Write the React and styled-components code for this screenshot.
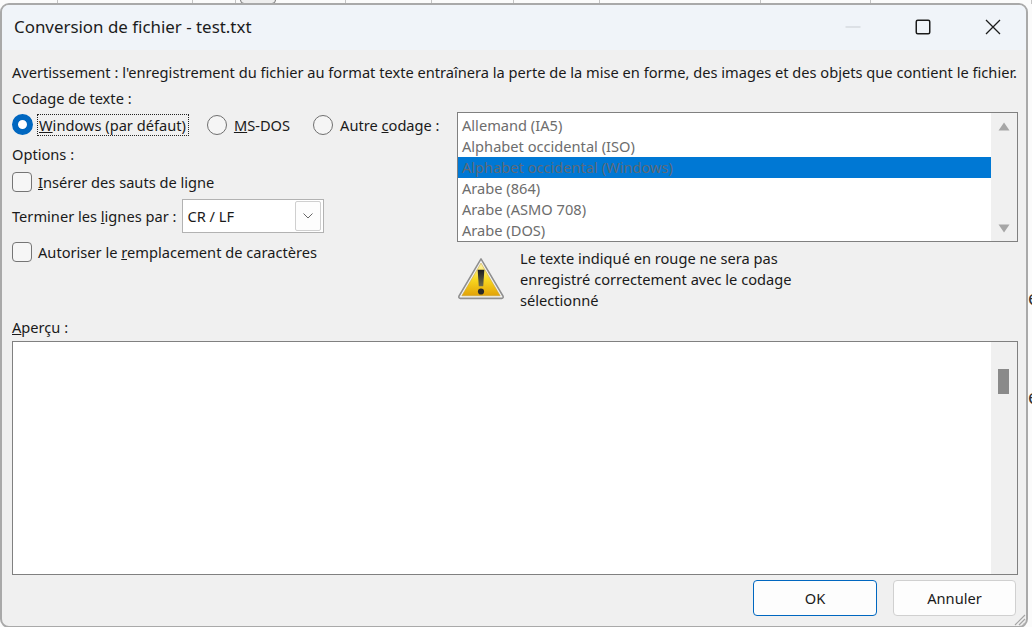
import React from 'react'
import styled, { createGlobalStyle } from 'styled-components'

const GlobalStyle = createGlobalStyle`
  html, body { margin: 0; padding: 0; background: #fff; }
  * { box-sizing: border-box; }
`

const Page = styled.div`
  position: relative;
  width: 1032px;
  height: 627px;
  overflow: hidden;
  background: #fbfbfb;
  font-family: "Noto Sans", "Open Sans", sans-serif;
  font-size: 14.64px;
  color: #1a1a1a;
`

// bits of the spreadsheet that show behind the dialog
const SheetTop = styled.div`
  position: absolute;
  top: 0;
  left: 0;
  display: flex;
  height: 4px;
`
const SheetCell = styled.div`
  width: ${p => p.$w}px;
  border-right: 1px solid #c4c4c4;
`
const SheetTab = styled.div`
  position: absolute;
  top: -6px;
  left: 240px;
  width: 36px;
  height: 10px;
  border: 1px solid #777;
  border-radius: 4px;
  background: #eee;
`
const SheetGlyph = styled.span`
  position: absolute;
  top: ${p => p.$y}px;
  left: 1028px;
  font-size: 19px;
  line-height: 20px;
  color: #333;
`

const Dialog = styled.div`
  position: relative;
  width: 1028px;
  height: 625px;
  margin-top: 3px;
  border: 2px solid #a9a9a9;
  border-radius: 9px;
  background: #f0f0f0;
  overflow: hidden;
`

const TitleBar = styled.div`
  display: flex;
  align-items: center;
  height: 45px;
  background: #f0f4f9;
  padding-left: 12px;
`
const Title = styled.div`
  flex: 1;
  font-size: 16.9px;
  color: #1c1c1c;
  margin-top: -2px;
`
const WinControls = styled.div`
  display: flex;
  align-items: center;
  margin-right: -2px;
`
const WinButton = styled.div`
  display: flex;
  align-items: center;
  justify-content: center;
  width: 70px;
  height: 45px;
  margin-top: -1px;
`

const Body = styled.div`
  padding: 12px 8px 0 10px;
`
const TextLine = styled.div`
  height: 21px;
  line-height: 21px;
  white-space: nowrap;
  margin-top: ${p => p.$top || 0}px;
`

const Main = styled.div`
  display: grid;
  grid-template-columns: 445px 561px;
  height: 205px;
  margin-top: 3px;
`
const LeftCol = styled.div`
  display: flex;
  flex-direction: column;
`
const RightCol = styled.div`
  display: flex;
  flex-direction: column;
`

const RadioRow = styled.div`
  display: flex;
  align-items: center;
  height: 22px;
  margin-top: 2px;
`
const RadioDot = styled.span`
  flex: none;
  width: ${p => (p.$on ? 21 : 20)}px;
  height: ${p => (p.$on ? 21 : 20)}px;
  border-radius: 50%;
  margin-top: -1px;
  background: ${p => (p.$on ? '#fff' : '#f5f5f5')};
  border: ${p => (p.$on ? '6.5px solid #0067c0' : '1.4px solid #6f6f6f')};
`
const RadioLabel = styled.span`
  white-space: nowrap;
  margin-left: ${p => p.$gap}px;
  margin-right: ${p => p.$after}px;
  padding: 0 ${p => (p.$focus ? 2 : 0)}px 0 1px;
  height: 22px;
  line-height: 20px;
  border: ${p => (p.$focus ? '1px dotted #222' : '1px solid transparent')};
`

const CheckRow = styled.div`
  display: flex;
  align-items: center;
  gap: 6px;
  height: 21px;
  margin-top: ${p => p.$top}px;
  white-space: nowrap;
`
const CheckBox = styled.span`
  width: 20px;
  height: 20px;
  border: 1.3px solid #757575;
  border-radius: 4px;
  background: #f6f6f6;
`

const ComboRow = styled.div`
  display: flex;
  align-items: center;
  height: 34px;
  margin-top: 7px;
  white-space: nowrap;
`
const Combo = styled.div`
  display: flex;
  align-items: center;
  justify-content: space-between;
  width: 142px;
  height: 34px;
  margin-left: 6px;
  padding: 2px 2px 2px 4px;
  background: #fff;
  border: 1px solid #b2b2b2;
`
const ComboArrow = styled.div`
  display: flex;
  align-items: center;
  justify-content: center;
  width: 26px;
  height: 30px;
  background: #fdfdfd;
  border: 1px solid #cfcfcf;
  border-radius: 2px;
`

const ListBox = styled.div`
  display: flex;
  height: 130px;
  background: #fff;
  border: 1px solid #808080;
  overflow: hidden;
`
const ListItems = styled.div`
  flex: 1;
  padding-top: 2px;
`
const ListItem = styled.div`
  height: 21px;
  line-height: 21px;
  padding-left: 4px;
  color: #6d6d6d;
  background: ${p => (p.$selected ? '#0078d4' : 'transparent')};
  ${p => p.$selected && 'color: #5e6a78;'}
`
const ListScroll = styled.div`
  display: flex;
  flex-direction: column;
  align-items: center;
  justify-content: space-between;
  width: 26px;
  padding: 9px 0 8px;
  background: #f0f0f0;
`

const WarningRow = styled.div`
  display: flex;
  margin-top: 6px;
`
const WarningIcon = styled.svg`
  flex: none;
  width: 48px;
  height: 45px;
  margin-top: 8px;
  margin-right: 15px;
`
const WarningText = styled.div`
  line-height: 21px;
  width: 300px;
`

const Preview = styled.div`
  display: flex;
  justify-content: flex-end;
  height: 234px;
  margin-top: 3px;
  background: #fff;
  border: 1px solid #808080;
`
const PreviewScroll = styled.div`
  width: 26px;
  padding: 27px 0 0 7px;
  background: #f0f0f0;
`
const PreviewThumb = styled.div`
  width: 11px;
  height: 25px;
  background: #8a8a8a;
`

const Footer = styled.div`
  display: flex;
  justify-content: flex-end;
  gap: 16px;
  margin-top: 5px;
  padding-right: 2px;
`
const Button = styled.div`
  width: ${p => p.$w}px;
  height: 36px;
  line-height: 35px;
  text-align: center;
  border-radius: 4px;
  background: #fdfdfd;
  border: ${p => (p.$primary ? '1.4px solid #0067c0' : '1px solid #d0d0d0')};
`

const Grip = styled.svg`
  position: absolute;
  right: 0;
  bottom: 0;
  width: 14px;
  height: 14px;
`

const cells = [58, 135, 43, 110, 86, 82, 86, 161, 110, 161]
const items = [
  'Allemand (IA5)',
  'Alphabet occidental (ISO)',
  'Alphabet occidental (Windows)',
  'Arabe (864)',
  'Arabe (ASMO 708)',
  'Arabe (DOS)',
]

export default function App() {
  return (
    <Page>
      <GlobalStyle />
      <SheetTop>
        {cells.map((w, i) => <SheetCell key={i} $w={w} />)}
      </SheetTop>
      <SheetTab />
      <SheetGlyph $y={288}>e</SheetGlyph>
      <SheetGlyph $y={387}>e</SheetGlyph>

      <Dialog>
        <TitleBar>
          <Title>Conversion de fichier - test.txt</Title>
          <WinControls>
            <WinButton>
              <svg width="16" height="16" viewBox="0 0 16 16"><path d="M0.5 8h15" stroke="#c9cdd2" strokeWidth="1" /></svg>
            </WinButton>
            <WinButton>
              <svg width="16" height="16" viewBox="0 0 16 16"><rect x="1.25" y="1.25" width="13.5" height="13.5" rx="1.5" fill="none" stroke="#1c1c1c" strokeWidth="1.5" /></svg>
            </WinButton>
            <WinButton>
              <svg width="16" height="16" viewBox="0 0 16 16"><path d="M1 1l14 14M15 1L1 15" stroke="#1c1c1c" strokeWidth="1.3" /></svg>
            </WinButton>
          </WinControls>
        </TitleBar>

        <Body>
          <TextLine>Avertissement : l'enregistrement du fichier au format texte entraînera la perte de la mise en forme, des images et des objets que contient le fichier.</TextLine>
          <TextLine $top={5}>Codage de texte :</TextLine>
          <Main>
            <LeftCol>
              <RadioRow>
                <RadioDot $on />
                <RadioLabel $gap={4} $after={18} $focus><u>W</u>indows (par défaut)</RadioLabel>
                <RadioDot />
                <RadioLabel $gap={5} $after={22}><u>M</u>S-DOS</RadioLabel>
                <RadioDot />
                <RadioLabel $gap={5} $after={0}>Autre <u>c</u>odage :</RadioLabel>
              </RadioRow>
              <TextLine $top={8}>Options :</TextLine>
              <CheckRow $top={6}>
                <CheckBox />
                <span><u>I</u>nsérer des sauts de ligne</span>
              </CheckRow>
              <ComboRow>
                <span>Terminer les <u>l</u>ignes par :</span>
                <Combo>
                  <span>CR / LF</span>
                  <ComboArrow>
                    <svg width="12" height="8" viewBox="0 0 12 8"><path d="M1.5 1.5L6 6l4.5-4.5" fill="none" stroke="#666" strokeWidth="1" /></svg>
                  </ComboArrow>
                </Combo>
              </ComboRow>
              <CheckRow $top={8}>
                <CheckBox />
                <span>Autoriser le <u>r</u>emplacement de caractères</span>
              </CheckRow>
            </LeftCol>

            <RightCol>
              <ListBox>
                <ListItems>
                  {items.map((t, i) => <ListItem key={t} $selected={i === 2}>{t}</ListItem>)}
                </ListItems>
                <ListScroll>
                  <svg width="12" height="9" viewBox="0 0 12 9"><path d="M6 0.5L11.5 8.5H0.5Z" fill="#a6a6a6" /></svg>
                  <svg width="12" height="9" viewBox="0 0 12 9"><path d="M6 8.5L11.5 0.5H0.5Z" fill="#a6a6a6" /></svg>
                </ListScroll>
              </ListBox>
              <WarningRow>
                <WarningIcon viewBox="0 0 50 46">
                  <defs>
                    <linearGradient id="warnFill" x1="0" y1="0" x2="0" y2="1">
                      <stop offset="0" stopColor="#fff6b0" />
                      <stop offset="0.5" stopColor="#f8d820" />
                      <stop offset="1" stopColor="#e2a208" />
                    </linearGradient>
                    <linearGradient id="warnMark" x1="0" y1="0" x2="0" y2="1">
                      <stop offset="0" stopColor="#1e1e1e" />
                      <stop offset="1" stopColor="#6b6b50" />
                    </linearGradient>
                  </defs>
                  <path d="M25 2.5L48 41.5a1.5 1.5 0 0 1-1.3 2.2H3.3A1.5 1.5 0 0 1 2 41.5Z" fill="#f4f4f4" stroke="#8f8f8f" strokeWidth="1.6" strokeLinejoin="round" />
                  <path d="M25 7L45 41H5Z" fill="url(#warnFill)" stroke="#c9a63a" strokeWidth="0.6" />
                  <path d="M21.5 14h7l-1.2 17h-4.6Z" fill="url(#warnMark)" />
                  <circle cx="25" cy="36.5" r="3.2" fill="#2a2a2a" />
                </WarningIcon>
                <WarningText>Le texte indiqué en rouge ne sera pas enregistré correctement avec le codage sélectionné</WarningText>
              </WarningRow>
            </RightCol>
          </Main>

          <TextLine><u>A</u>perçu :</TextLine>
          <Preview>
            <PreviewScroll>
              <PreviewThumb />
            </PreviewScroll>
          </Preview>
          <Footer>
            <Button $primary $w={124}>OK</Button>
            <Button $w={123}>Annuler</Button>
          </Footer>
        </Body>
        <Grip viewBox="0 0 14 14">
          <path d="M13 3L3 13M13 7L7 13M13 11L11 13" stroke="#a5a5a5" strokeWidth="1.2" />
        </Grip>
      </Dialog>
    </Page>
  )
}
